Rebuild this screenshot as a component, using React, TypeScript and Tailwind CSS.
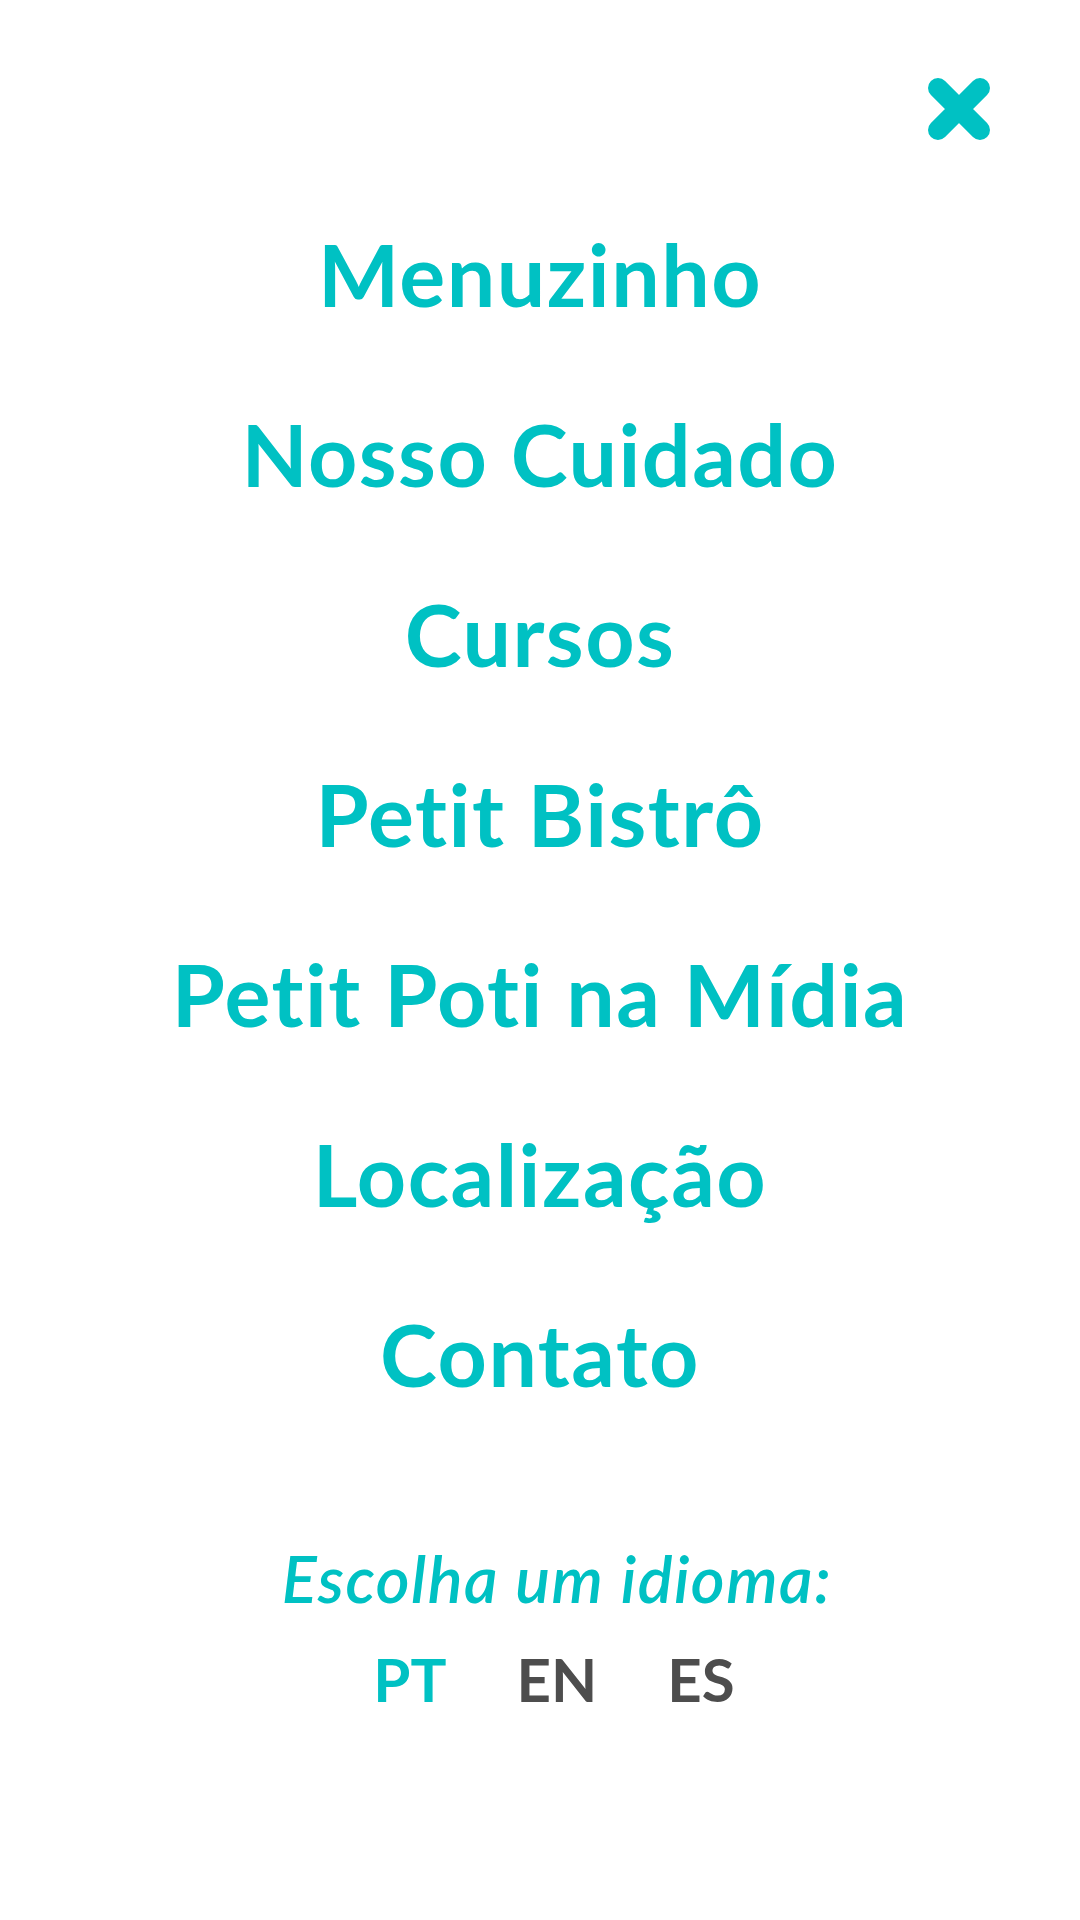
import { ReactNode } from "react";

const items = [
  "Menuzinho",
  "Nosso Cuidado",
  "Cursos",
  "Petit Bistrô",
  "Petit Poti na Mídia",
  "Localização",
  "Contato",
];

function CloseIcon() {
  return (
    <svg width="62" height="62" viewBox="0 0 62 62" fill="none">
      <path
        d="M10 10 L52 52 M52 10 L10 52"
        stroke="#00c1c3"
        strokeWidth="20"
        strokeLinecap="round"
      />
    </svg>
  );
}

function MenuLink({ children }: { children: ReactNode }) {
  return (
    <a
      href="#"
      className="h-[180px] flex items-center justify-center text-[86px] font-bold tracking-[1.5px] text-[#00c1c3] leading-none [font-variant-ligatures:none]"
    >
      {children}
    </a>
  );
}

export default function App() {
  return (
    <div
      className="w-[1080px] h-[1920px] bg-white flex flex-col"
      style={{ fontFamily: "Lato, 'Open Sans', sans-serif" }}
    >
      <div className="flex justify-end pt-[78px] pr-[90px]">
        <button className="w-[62px] h-[62px]">
          <CloseIcon />
        </button>
      </div>

      <nav className="flex flex-col mt-[44px]">
        {items.map((item) => (
          <MenuLink key={item}>{item}</MenuLink>
        ))}
      </nav>

      <div className="flex flex-col items-center mt-[102px] [font-variant-ligatures:none]">
        <p className="ml-[34px] text-[65px] italic font-semibold tracking-[1.5px] text-[#00c1c3] leading-none">
          Escolha um idioma:
        </p>
        <div className="flex items-center gap-[70px] mt-[38px] ml-[28px] text-[60px] font-bold leading-none">
          <span className="text-[#00c1c3]">PT</span>
          <span className="text-[#4d4d4d]">EN</span>
          <span className="text-[#4d4d4d]">ES</span>
        </div>
      </div>
    </div>
  );
}
